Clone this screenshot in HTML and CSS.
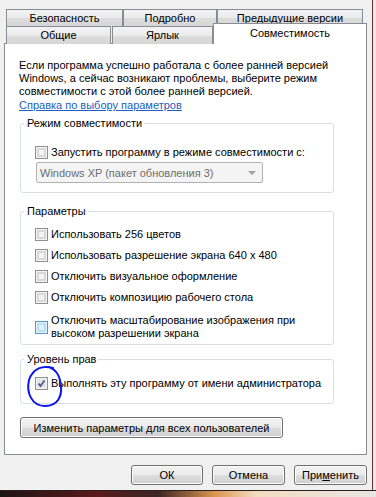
FILE: index.html
```html
<!DOCTYPE html>
<html lang="ru">
<head>
  <meta charset="UTF-8" />
  <title>Свойства: Совместимость</title>
  <link rel="stylesheet" href="styles.css">
</head>
<body>
  <div class="window">
    <div class="tabs">
      <div class="tab-row back">
        <div class="tab t-sec">Безопасность</div>
        <div class="tab t-det">Подробно</div>
        <div class="tab t-prev">Предыдущие версии</div>
      </div>
      <div class="tab-row front">
        <div class="tab t-gen">Общие</div>
        <div class="tab t-lnk">Ярлык</div>
        <div class="tab active">Совместимость</div>
      </div>
    </div>

    <div class="panel">
      <p class="intro">Если программа успешно работала с более ранней версией<br>Windows, а сейчас возникают проблемы, выберите режим<br>совместимости с этой более ранней версией.</p>
      <a class="help" href="#">Справка по выбору параметров</a>

      <fieldset class="group g-mode">
        <legend>Режим совместимости</legend>
        <label class="check"><span class="box"></span>Запустить программу в режиме совместимости с:</label>
        <div class="select">
          <span>Windows XP (пакет обновления 3)</span>
          <span class="arrow"></span>
        </div>
      </fieldset>

      <fieldset class="group g-params">
        <legend>Параметры</legend>
        <label class="check"><span class="box"></span>Использовать 256 цветов</label>
        <label class="check"><span class="box"></span>Использовать разрешение экрана 640 x 480</label>
        <label class="check"><span class="box"></span>Отключить визуальное оформление</label>
        <label class="check"><span class="box"></span>Отключить композицию рабочего стола</label>
        <label class="check two-line"><span class="box hover"></span>Отключить масштабирование изображения при<br>высоком разрешении экрана</label>
      </fieldset>

      <fieldset class="group g-level">
        <legend>Уровень прав</legend>
        <label class="check admin"><span class="box checked">
          <svg width="9" height="9" viewBox="0 0 9 9"><path d="M1.5 4.5 L3.5 7 L7.5 1.5" fill="none" stroke="#4a5d98" stroke-width="1.8"/></svg>
        </span>Выполнять эту программу от имени администратора
          <svg class="scribble" width="40" height="46" viewBox="0 0 40 46">
            <path d="M28 4 C18 1 8 4 4 16 C1 29 7 42 20 42 C33 42 37 32 36 22 C35 12 32 6 24 3" fill="none" stroke="#0a14f0" stroke-width="2" stroke-linecap="round"/>
          </svg>
        </label>
      </fieldset>

      <button class="btn wide">Изменить параметры для всех пользователей</button>
    </div>

    <div class="actions">
      <button class="btn">ОК</button>
      <button class="btn">Отмена</button>
      <button class="btn">При<u>м</u>енить</button>
    </div>
  </div>
  <div class="taskbar"></div>
</body>
</html>
```

FILE: styles.css
```css
body {
  margin: 0;
  background: #eee6e4;
  font-family: 'Liberation Sans', Arial, sans-serif;
  font-size: 11px;
  color: #000;
}

.window {
  width: 372px;
  height: 490px;
  background: #f0f0f0;
  border-right: 1px solid #5e3434;
}

.tabs {
  padding: 9px 0 0 6px;
}

.tab-row {
  display: flex;
}

.tab {
  box-sizing: border-box;
  border: 1px solid #898c95;
  border-bottom: none;
  background: linear-gradient(#f3f3f3, #ebebeb 50%, #dddddd 51%, #d6d6d6);
  text-align: center;
  line-height: 16px;
}

.back .tab {
  height: 17px;
}

.t-sec { width: 117px; }
.t-det { width: 94px; }
.t-prev { width: 146px; }

.front {
  height: 18px;
  align-items: flex-end;
  margin-bottom: -1px;
  position: relative;
  z-index: 1;
}

.front .tab {
  height: 18px;
  line-height: 17px;
}

.t-gen { width: 105px; margin-right: 1px; }
.t-lnk { width: 101px; }

.front .tab.active {
  width: 154px;
  height: 21px;
  line-height: 19px;
  background: #fff;
}

.panel {
  box-sizing: border-box;
  width: 363px;
  height: 412px;
  margin-left: 4px;
  background: #fff;
  border: 1px solid #898c95;
  padding: 15px 0 0 14px;
}

.intro {
  margin: 0;
  line-height: 13px;
  white-space: nowrap;
}

.help {
  display: inline-block;
  margin-top: 1px;
  line-height: 13px;
  color: #1c5fbf;
  text-decoration: underline;
}

.group {
  box-sizing: border-box;
  width: 314px;
  margin: 5px 0 0 1px;
  border: 1px solid #d5dfe5;
  border-radius: 3px;
  padding: 0 0 0 14px;
}

.group legend {
  margin-left: -11px;
  padding: 0 2px 0 3px;
  line-height: 13px;
}

.check {
  display: flex;
  align-items: center;
  line-height: 13px;
  white-space: nowrap;
}

.box {
  box-sizing: border-box;
  width: 13px;
  height: 13px;
  border: 1px solid #8f8f8f;
  background: #f4f4f4;
  box-shadow: inset 0 0 0 1px #f4f4f4, inset 0 0 0 3px #d8d8d8;
  margin-right: 3px;
  flex: none;
  display: flex;
  align-items: center;
  justify-content: center;
}

.box.hover {
  border-color: #5b8fc7;
  background: #dff1fc;
  box-shadow: inset 0 0 0 1px #e8f6fd, inset 0 0 0 3px #b7dff6;
}

.box.checked {
  background: #e4e4e4;
  box-shadow: inset 0 0 0 1px #f4f4f4;
}

.g-mode .check {
  margin-top: 16px;
}

.select {
  box-sizing: border-box;
  width: 227px;
  height: 21px;
  margin: 3px 0 9px 1px;
  border: 1px solid #b2b2b2;
  border-radius: 2px;
  background: #f4f4f4;
  color: #6d6d6d;
  display: flex;
  align-items: center;
  justify-content: space-between;
  padding: 0 4px 0 3px;
}

.arrow {
  width: 0;
  height: 0;
  border-left: 4px solid transparent;
  border-right: 4px solid transparent;
  border-top: 4px solid #a2a2a2;
  margin-right: 2px;
}

.g-params {
  margin-top: 12px;
  padding-top: 10px;
  padding-bottom: 4px;
}

.g-params .check + .check {
  margin-top: 8px;
}

.g-params .two-line {
  margin-top: 10px !important;
}

.g-level {
  margin-top: 8px;
  padding-top: 11px;
  padding-bottom: 13px;
}

.admin {
  position: relative;
}

.scribble {
  position: absolute;
  left: -10px;
  top: -13px;
}

.btn {
  box-sizing: border-box;
  height: 20px;
  width: 73px;
  border: 1px solid #707070;
  border-radius: 3px;
  background: linear-gradient(#f2f2f2, #ebebeb 48%, #dddddd 52%, #cfcfcf);
  box-shadow: inset 0 0 0 1px #fcfcfc;
  font: 11px 'Liberation Sans', Arial, sans-serif;
  color: #000;
  padding: 0;
}

.btn.wide {
  width: 263px;
  height: 21px;
  margin: 13px 0 0 1px;
}

.actions {
  display: flex;
  justify-content: flex-end;
  gap: 9px;
  padding: 10px 5px 0 0;
}

.actions .btn:first-child {
  width: 72px;
}

.taskbar {
  height: 7px;
  border-top: 1px solid #2a2020;
  background: linear-gradient(to right, #1c1414, #5a1a1a 25%, #3a2424 42%, #d9964c 57%, #f2dcc0 68%, #e9e6e4 100%);
}
```
